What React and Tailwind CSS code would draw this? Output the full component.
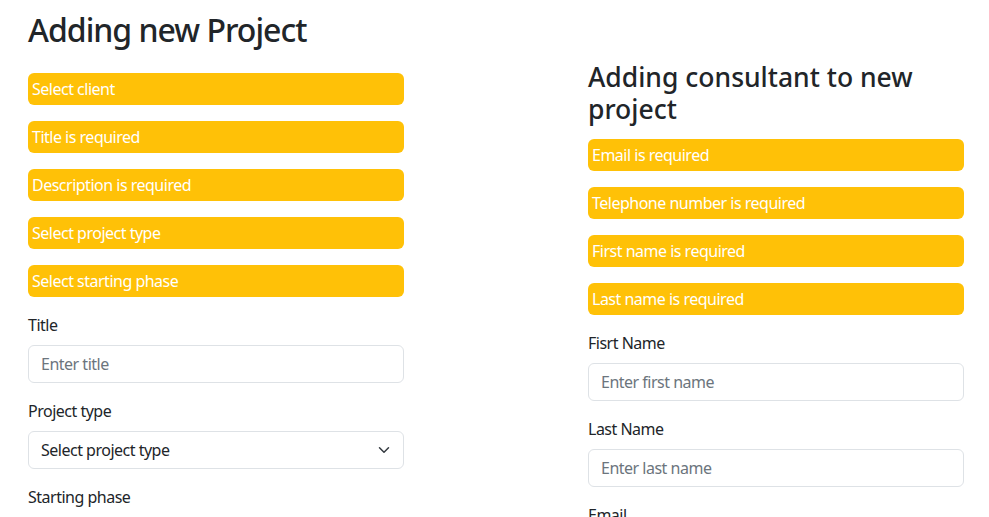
import React from "react";

const font = { fontFamily: '"Noto Sans", "Open Sans", sans-serif' };

const Warning = ({ children }) => (
    <div className="mb-4 h-8 rounded-md bg-[#ffc107] px-1 text-base leading-8 tracking-[-0.5px] text-white">
        {children}
    </div>
);

const Field = ({ label, placeholder }) => (
    <div className="mb-4">
        <label className="mb-2 block text-base leading-6 tracking-[-0.5px] text-[#212529]">{label}</label>
        <input
            type="text"
            placeholder={placeholder}
            className="block h-[38px] w-full rounded-md border border-[#dee2e6] bg-white px-3 text-base tracking-[-0.5px] text-[#212529] placeholder:text-[#6c757d] focus:outline-none"
        />
    </div>
);

const SelectField = ({ label, placeholder }) => (
    <div className="mb-4">
        <label className="mb-2 block text-base leading-6 tracking-[-0.5px] text-[#212529]">{label}</label>
        <div className="relative">
            <select
                defaultValue=""
                className="block h-[38px] w-full appearance-none rounded-md border border-[#dee2e6] bg-white pl-3 pr-9 text-base tracking-[-0.5px] text-[#212529] focus:outline-none"
            >
                <option value="" disabled>{placeholder}</option>
            </select>
            <svg
                className="pointer-events-none absolute right-3 top-[13px]"
                width="16"
                height="12"
                viewBox="0 0 16 16"
                fill="none"
                stroke="#343a40"
                strokeWidth="2"
                strokeLinecap="round"
                strokeLinejoin="round"
            >
                <path d="m2 5 6 6 6-6" />
            </svg>
        </div>
    </div>
);

export default function App() {
    return (
        <div className="h-[517px] w-[989px] overflow-hidden bg-white" style={font}>
            <div className="flex">
                {/* project form */}
                <div className="ml-[28px] w-[376px]">
                    <h1 className="mt-[8px] mb-[21px] text-[32px] font-medium leading-[44px] tracking-[-1px] text-[#212529]">
                        Adding new Project
                    </h1>
                    <Warning>Select client</Warning>
                    <Warning>Title is required</Warning>
                    <Warning>Description is required</Warning>
                    <Warning>Select project type</Warning>
                    <Warning>Select starting phase</Warning>
                    <Field label="Title" placeholder="Enter title" />
                    <SelectField label="Project type" placeholder="Select project type" />
                    <SelectField label="Starting phase" placeholder="Select starting phase" />
                </div>

                {/* consultant form */}
                <div className="ml-[184px] w-[376px]">
                    <h3 className="mt-[61px] mb-[14px] text-[26.5px] font-medium leading-8 text-[#212529]">
                        Adding consultant to new project
                    </h3>
                    <Warning>Email is required</Warning>
                    <Warning>Telephone number is required</Warning>
                    <Warning>First name is required</Warning>
                    <Warning>Last name is required</Warning>
                    <Field label="Fisrt Name" placeholder="Enter first name" />
                    <Field label="Last Name" placeholder="Enter last name" />
                    <Field label="Email" placeholder="Enter email" />
                </div>
            </div>
        </div>
    );
}
